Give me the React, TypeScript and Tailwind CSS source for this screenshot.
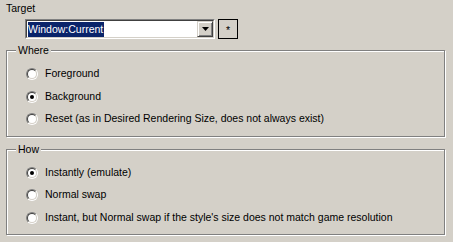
import React from "react";

function Radio({ checked }: { checked?: boolean }) {
  return (
    <span className="relative inline-block w-3 h-3 shrink-0">
      <span className="absolute inset-0 rounded-full border border-t-[#808080] border-l-[#808080] border-b-white border-r-white">
        <span className="absolute inset-0 rounded-full border border-t-[#404040] border-l-[#404040] border-b-[#d4d0c8] border-r-[#d4d0c8] bg-white flex items-center justify-center">
          {checked && <span className="block w-1 h-1 rounded-full bg-black" />}
        </span>
      </span>
    </span>
  );
}

function Option({ label, checked }: { label: string; checked?: boolean }) {
  return (
    <div className="flex items-center h-[22.5px] pl-[19px]">
      <Radio checked={checked} />
      <span className="ml-[7px]">{label}</span>
    </div>
  );
}

function Group({ title, children }: { title: string; children: React.ReactNode }) {
  return (
    <fieldset className="border border-[#808080] shadow-[inset_1px_1px_0_#fff,1px_1px_0_#fff] px-0 pt-[6px] pb-[5px]">
      <legend className="ml-[9px] px-[2px] bg-[#d4d0c8] leading-[13px]">{title}</legend>
      {children}
    </fieldset>
  );
}

export default function App() {
  return (
    <div
      className="w-[453px] h-[242px] bg-[#d4d0c8] text-black text-[10.5px] pl-[6px] pr-[8px] pt-[2px] overflow-hidden"
      style={{ fontFamily: '"Liberation Sans", Arial, sans-serif' }}
    >
      <div className="leading-[13px]">Target</div>
      <div className="flex items-center mt-[4px] ml-[19px] gap-[3px]">
        {/* combobox */}
        <div className="w-[190px] h-[20px] border border-t-[#808080] border-l-[#808080] border-b-white border-r-white">
          <div className="h-full border border-t-[#404040] border-l-[#404040] border-b-[#d4d0c8] border-r-[#d4d0c8] bg-white flex items-center">
            <div className="flex-1 pl-[1px] flex items-center">
              <span className="bg-[#0a246a] text-white leading-[15px] pr-[1px]">Window:Current</span>
            </div>
            <div className="w-[16px] h-[16px] bg-[#d4d0c8] border border-t-[#d4d0c8] border-l-[#d4d0c8] border-b-[#404040] border-r-[#404040] shadow-[inset_1px_1px_0_#fff,inset_-1px_-1px_0_#808080] flex items-center justify-center">
              <svg width="7" height="4" viewBox="0 0 7 4">
                <path d="M0 0h7L3.5 4z" fill="#000" />
              </svg>
            </div>
          </div>
        </div>
        <div className="w-[20px] h-[20px] border border-black flex items-center justify-center leading-none pt-[3px]">*</div>
      </div>

      <div className="mt-[5px]">
        <Group title="Where">
          <Option label="Foreground" />
          <Option label="Background" checked />
          <Option label="Reset (as in Desired Rendering Size, does not always exist)" />
        </Group>
      </div>

      <div className="mt-[6px]">
        <Group title="How">
          <Option label="Instantly (emulate)" checked />
          <Option label="Normal swap" />
          <Option label="Instant, but Normal swap if the style's size does not match game resolution" />
        </Group>
      </div>
    </div>
  );
}
